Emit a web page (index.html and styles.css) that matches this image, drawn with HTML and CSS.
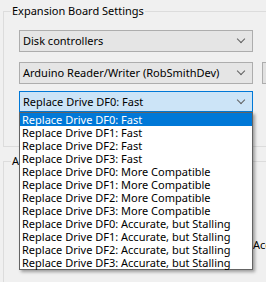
FILE: index.html
```html
<!DOCTYPE html>
<html lang="en">
<head>
    <meta charset="UTF-8">
    <title>Expansion Board Settings</title>
    <link rel="stylesheet" href="styles.css">
</head>
<body>
    <fieldset class="group group-board">
        <legend>Expansion Board Settings</legend>
        <div class="combo combo-first">
            <span class="combo-text">Disk controllers</span>
            <span class="chevron"></span>
        </div>
        <div class="combo-row">
            <div class="combo">
                <span class="combo-text">Arduino Reader/Writer (RobSmithDev)</span>
                <span class="chevron"></span>
            </div>
            <div class="side-button"></div>
        </div>
        <div class="combo combo-open">
            <span class="combo-text">Replace Drive DF0: Fast</span>
            <span class="chevron"></span>
        </div>
    </fieldset>

    <fieldset class="group group-advanced">
        <legend>Advanced</legend>
        <div class="option-label">Accurate</div>
    </fieldset>

    <ul class="dropdown">
        <li class="selected">Replace Drive DF0: Fast</li>
        <li>Replace Drive DF1: Fast</li>
        <li>Replace Drive DF2: Fast</li>
        <li>Replace Drive DF3: Fast</li>
        <li>Replace Drive DF0: More Compatible</li>
        <li>Replace Drive DF1: More Compatible</li>
        <li>Replace Drive DF2: More Compatible</li>
        <li>Replace Drive DF3: More Compatible</li>
        <li>Replace Drive DF0: Accurate, but Stalling</li>
        <li>Replace Drive DF1: Accurate, but Stalling</li>
        <li>Replace Drive DF2: Accurate, but Stalling</li>
        <li>Replace Drive DF3: Accurate, but Stalling</li>
    </ul>
</body>
</html>
```

FILE: styles.css
```css
* {
    margin: 0;
    padding: 0;
    box-sizing: border-box;
}

body {
    font-family: 'Noto Sans', 'Open Sans', sans-serif;
    font-size: 11px;
    color: #000;
    background: #f0f0f0;
    width: 266px;
    height: 282px;
    overflow: hidden;
    position: relative;
}

.group {
    border: 1px solid #dcdcdc;
    margin-left: 3px;
    width: 320px;
    padding: 0 0 0 15px;
}

.group legend {
    margin-left: -8px;
    padding: 0 1px;
    line-height: 16px;
    height: 16px;
}

.group-board {
    margin-top: 3px;
    padding-bottom: 34px;
}

.group-advanced {
    margin-top: 6px;
    height: 140px;
}

.combo {
    width: 234px;
    height: 22px;
    border: 1px solid #adadad;
    background: #e5e5e5;
    display: flex;
    align-items: center;
    justify-content: space-between;
    padding: 0 8px 0 3px;
}

.combo-first {
    margin-top: 11px;
}

.combo-row {
    display: flex;
    gap: 9px;
    margin-top: 10px;
}

.side-button {
    width: 30px;
    height: 22px;
    border: 1px solid #adadad;
    background: #e1e1e1;
}

.combo-open {
    margin-top: 7px;
    height: 21px;
    background: #cce4f7;
    border-color: #0078d7;
}

.combo-text {
    white-space: nowrap;
    line-height: 16px;
}

.chevron {
    width: 6px;
    height: 6px;
    border-right: 1px solid #606060;
    border-bottom: 1px solid #606060;
    transform: rotate(45deg);
    margin-top: -4px;
}

.option-label {
    margin-top: 68px;
    padding-left: 234px;
    white-space: nowrap;
}

.dropdown {
    list-style: none;
    position: absolute;
    left: 19px;
    top: 112px;
    width: 234px;
    height: 158px;
    background: #fff;
    border: 1px solid #646464;
    box-shadow: 2px 2px 3px rgba(0, 0, 0, 0.35);
    padding: 0;
}

.dropdown li {
    height: 13px;
    line-height: 13px;
    padding-left: 2px;
    white-space: nowrap;
}

.dropdown li.selected {
    background: #0078d7;
    color: #fff;
}
```
